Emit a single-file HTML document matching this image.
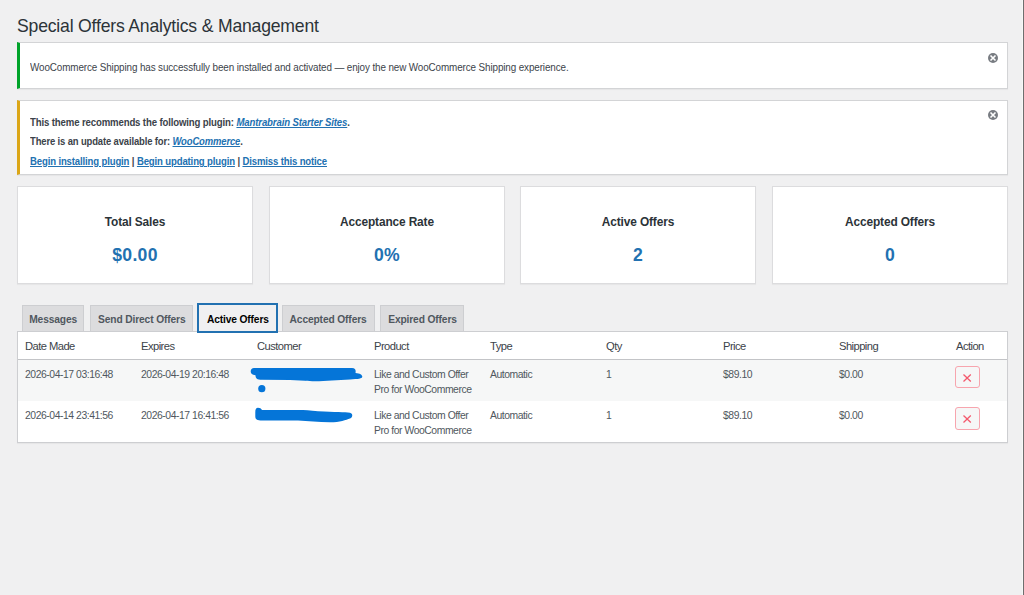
<!DOCTYPE html>
<html><head><meta charset="utf-8">
<style>
*{box-sizing:border-box;margin:0;padding:0}
html,body{width:1024px;height:595px;overflow:hidden;background:#f0f0f1;font-family:"Liberation Sans",sans-serif;color:#3c434a}
.rb{position:absolute;left:1022px;top:0;width:2px;height:595px;background:#f7f7f7;border-right:1px solid #6e6e6e}
h1{position:absolute;left:17px;top:14.5px;letter-spacing:-0.2px;transform:scaleX(0.957);transform-origin:0 0;font-size:18.4px;font-weight:400;color:#2c3338;line-height:22px;white-space:nowrap}
.notice{position:absolute;left:17px;width:991px;background:#fff;border:1px solid #d3d4d6;border-left-width:3px;box-shadow:0 1px 1px rgba(0,0,0,.04)}
.n1{top:42px;height:47px;border-left-color:#00a32a}
.n2{top:100px;height:75px;border-left-color:#dba617}
.ntext{position:absolute;left:10px;font-size:10.4px;white-space:nowrap;color:#3c434a}
.dismiss{position:absolute;width:10px;height:10px;border-radius:50%;background:#787c82}
.dismiss svg{position:absolute;left:0;top:0}
a{color:#2271b1;text-decoration:underline}
.card{position:absolute;top:186px;width:236px;height:98px;background:#fff;border:1px solid #dcdcde;box-shadow:0 1px 1px rgba(0,0,0,.04);text-align:center}
.card .t{position:absolute;left:0;right:0;top:27px;letter-spacing:-0.15px;transform:scaleX(0.93);font-size:12.8px;font-weight:700;color:#2c3338;line-height:16px}
.card .v{position:absolute;left:0;right:0;top:57px;letter-spacing:0.3px;font-size:17.6px;font-weight:700;color:#2271b1;line-height:22px}
.tab{position:absolute;top:305px;height:27px;background:#dcdcde;border:1px solid #cdced1;border-bottom:none;font-size:11.2px;font-weight:700;color:#50575e;line-height:26px;text-align:center;white-space:nowrap}
.tab span{display:inline-block;letter-spacing:-0.15px;transform:scaleX(0.915)}
.tab.active{background:#f0f0f1;color:#000;border:2px solid #2271b1;top:303px;height:30px;line-height:29px}
.tbl{position:absolute;left:17px;top:331px;width:991px;height:112px;background:#fff;border:1px solid #cdced1;box-shadow:0 1px 1px rgba(0,0,0,.04)}
.hdr{position:absolute;left:0;top:0;width:989px;height:28px;border-bottom:1px solid #c3c4c7}
.row{position:absolute;left:0;width:989px;height:41px}
.r1{top:28px;background:#f6f7f7}
.r2{top:69px}
.c{position:absolute;white-space:nowrap}
.hdr .c{top:7px;letter-spacing:-0.55px;font-size:11.2px;color:#3c434a;line-height:14px}
.row .c{top:8px;letter-spacing:-0.45px;font-size:10.4px;color:#50575e;line-height:14.5px}
.xbtn{position:absolute;width:25px;height:22.5px;border:1px solid #f7a5ae;border-radius:3px;background:#f6f7f7}
.scrib{position:absolute;background:#0a72d0;border-radius:8px}
</style></head><body>
<div class="rb"></div>
<h1>Special Offers Analytics &amp; Management</h1>

<div class="notice n1">
  <div class="ntext" style="top:19px;letter-spacing:-0.12px;transform:scaleX(0.95);transform-origin:0 0">WooCommerce Shipping has successfully been installed and activated — enjoy the new WooCommerce Shipping experience.</div>
  <div class="dismiss" style="left:967.7px;top:9.7px"><svg width="10" height="10" viewBox="0 0 10 10"><path d="M2.5 2.5L7.5 7.5M7.5 2.5L2.5 7.5" stroke="#fff" stroke-width="1.6" stroke-linecap="butt"/></svg></div>
</div>
<div class="notice n2">
  <div class="ntext" style="top:16px;font-weight:700;letter-spacing:-0.15px;transform:scaleX(0.925);transform-origin:0 0">This theme recommends the following plugin: <a><i>Mantrabrain Starter Sites</i></a>.</div>
  <div class="ntext" style="top:35px;font-weight:700;letter-spacing:-0.15px;transform:scaleX(0.91);transform-origin:0 0">There is an update available for: <a><i>WooCommerce</i></a>.</div>
  <div class="ntext" style="top:55px;font-weight:700;letter-spacing:-0.15px;transform:scaleX(0.92);transform-origin:0 0"><a>Begin installing plugin</a> | <a>Begin updating plugin</a> | <a>Dismiss this notice</a></div>
  <div class="dismiss" style="left:967.7px;top:8.8px"><svg width="10" height="10" viewBox="0 0 10 10"><path d="M2.5 2.5L7.5 7.5M7.5 2.5L2.5 7.5" stroke="#fff" stroke-width="1.6" stroke-linecap="butt"/></svg></div>
</div>

<div class="card" style="left:17px"><div class="t">Total Sales</div><div class="v">$0.00</div></div>
<div class="card" style="left:269px"><div class="t">Acceptance Rate</div><div class="v">0%</div></div>
<div class="card" style="left:520px"><div class="t">Active Offers</div><div class="v">2</div></div>
<div class="card" style="left:772px"><div class="t">Accepted Offers</div><div class="v">0</div></div>

<div class="tab" style="left:22px;width:62px"><span>Messages</span></div>
<div class="tab" style="left:90px;width:103px"><span>Send Direct Offers</span></div>
<div class="tab" style="left:282px;width:93px"><span>Accepted Offers</span></div>
<div class="tab" style="left:380px;width:84px"><span>Expired Offers</span></div>

<div class="tbl">
  <div class="hdr">
    <div class="c" style="left:7px">Date Made</div>
    <div class="c" style="left:123px">Expires</div>
    <div class="c" style="left:239px">Customer</div>
    <div class="c" style="left:356px">Product</div>
    <div class="c" style="left:472px">Type</div>
    <div class="c" style="left:588px">Qty</div>
    <div class="c" style="left:705px">Price</div>
    <div class="c" style="left:821px">Shipping</div>
    <div class="c" style="left:938px">Action</div>
  </div>
  <div class="row r1">
    <div class="c" style="left:7px">2026-04-17 03:16:48</div>
    <div class="c" style="left:123px">2026-04-19 20:16:48</div>
    <div class="c" style="left:356px">Like and Custom Offer<br>Pro for WooCommerce</div>
    <div class="c" style="left:472px">Automatic</div>
    <div class="c" style="left:588px">1</div>
    <div class="c" style="left:705px">$89.10</div>
    <div class="c" style="left:821px">$0.00</div>
    <div class="xbtn" style="left:937px;top:5.5px"><svg width="25" height="23" viewBox="0 0 25 23" style="position:absolute;left:-1px;top:-1px"><path d="M8.5 8.5L15.8 15.5M15.8 8.5L8.5 15.5" stroke="#f45a6e" stroke-width="1.3"/></svg></div>
  </div>
  <div class="row r2">
    <div class="c" style="left:7px">2026-04-14 23:41:56</div>
    <div class="c" style="left:123px">2026-04-17 16:41:56</div>
    <div class="c" style="left:356px">Like and Custom Offer<br>Pro for WooCommerce</div>
    <div class="c" style="left:472px">Automatic</div>
    <div class="c" style="left:588px">1</div>
    <div class="c" style="left:705px">$89.10</div>
    <div class="c" style="left:821px">$0.00</div>
    <div class="xbtn" style="left:937px;top:6px"><svg width="25" height="23" viewBox="0 0 25 23" style="position:absolute;left:-1px;top:-1px"><path d="M8.5 8.5L15.8 15.5M15.8 8.5L8.5 15.5" stroke="#f45a6e" stroke-width="1.3"/></svg></div>
  </div>
</div>
<div class="tab active" style="left:197px;width:81px"><span>Active Offers</span></div>
<svg style="position:absolute;left:0;top:0" width="1024" height="595" viewBox="0 0 1024 595">
<g fill="#0575d8">
<path d="M254 368 L352 368 C355.5 368 356 370 355.5 373 C360 373.3 362.3 375 362.3 376.7 C362.3 378.5 358 379 350 379.4 L332 380.5 C322 381.3 312 381.5 305 380.8 L290 380 L262 379.8 C257 379.8 255.5 378.5 255.5 375.3 C252 374.8 250.7 373.5 250.7 371.5 C250.7 369.2 252 368 254 368 Z"/>
<circle cx="261.8" cy="388.7" r="3.6"/>
<path d="M258 407.8 C256 407.8 255.3 409.5 255.3 412 L255.3 416.5 C255.3 419.5 257.5 420.5 262 420.5 L298 420.5 C308 421 318 422.3 330 422.3 C340 422.3 346 420 350 418.5 C353 417.3 353 413.5 350 412.8 C345 412.2 335 412 318 411.3 C310 410.3 305 410 298 410 L262 410 C261 408.5 260 407.8 258 407.8 Z"/>
</g></svg>
</body></html>
